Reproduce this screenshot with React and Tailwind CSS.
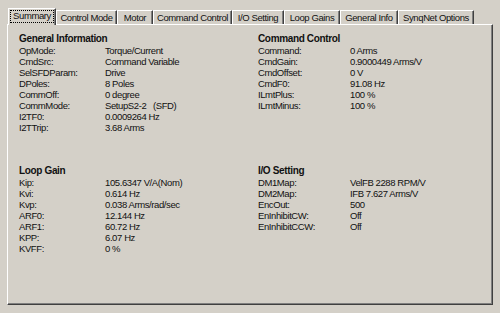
import React from "react";

const tabs = [
  { label: "Summary", w: "w-[48px]" },
  { label: "Control Mode", w: "w-[61px]" },
  { label: "Motor", w: "w-[36px]" },
  { label: "Command Control", w: "w-[79px]" },
  { label: "I/O Setting", w: "w-[52px]" },
  { label: "Loop Gains", w: "w-[56px]" },
  { label: "General Info", w: "w-[58px]" },
  { label: "SynqNet Options", w: "w-[76px]" },
];

const sections = [
  {
    title: "General Information",
    labelW: "grid-cols-[86px_1fr]",
    rows: [
      ["OpMode:", "Torque/Current"],
      ["CmdSrc:", "Command Variable"],
      ["SelSFDParam:", "Drive"],
      ["DPoles:", "8 Poles"],
      ["CommOff:", "0 degree"],
      ["CommMode:", "SetupS2-2   (SFD)"],
      ["I2TF0:", "0.0009264 Hz"],
      ["I2TTrip:", "3.68 Arms"],
    ],
  },
  {
    title: "Command Control",
    labelW: "grid-cols-[92px_1fr]",
    rows: [
      ["Command:", "0 Arms"],
      ["CmdGain:", "0.9000449 Arms/V"],
      ["CmdOffset:", "0 V"],
      ["CmdF0:", "91.08 Hz"],
      ["ILmtPlus:", "100 %"],
      ["ILmtMinus:", "100 %"],
    ],
  },
  {
    title: "Loop Gain",
    labelW: "grid-cols-[86px_1fr]",
    rows: [
      ["Kip:", "105.6347 V/A(Nom)"],
      ["Kvi:", "0.614 Hz"],
      ["Kvp:", "0.038 Arms/rad/sec"],
      ["ARF0:", "12.144 Hz"],
      ["ARF1:", "60.72 Hz"],
      ["KPP:", "6.07 Hz"],
      ["KVFF:", "0 %"],
    ],
  },
  {
    title: "I/O Setting",
    labelW: "grid-cols-[92px_1fr]",
    rows: [
      ["DM1Map:", "VelFB 2288 RPM/V"],
      ["DM2Map:", "IFB 7.627 Arms/V"],
      ["EncOut:", "500"],
      ["EnInhibitCW:", "Off"],
      ["EnInhibitCCW:", "Off"],
    ],
  },
];

const Section = ({ title, labelW, rows }) => (
  <div>
    <div className="font-bold text-[10px] leading-[11px] tracking-[-0.35px]">{title}</div>
    <div className={`grid ${labelW} mt-[1px]`}>
      {rows.map(([k, v]) => (
        <React.Fragment key={k}>
          <div className="leading-[11px]">{k}</div>
          <div className="leading-[11px] whitespace-pre">{v}</div>
        </React.Fragment>
      ))}
    </div>
  </div>
);

export default function App() {
  return (
    <div
      className="w-[500px] h-[313px] bg-[#d4d0c8] pl-[7px] pt-[8px] text-[9.5px] tracking-[-0.4px] text-[#111] overflow-hidden"
      style={{ fontFamily: '"Liberation Sans", Arial, sans-serif' }}
    >
      {/* Tab strip */}
      <div className="flex items-end h-[16px] pl-[1px]">
        {tabs.map((t, i) =>
          i === 0 ? (
            <div
              key={t.label}
              className={`${t.w} h-[17px] -mb-[1px] relative z-10 bg-[#d4d0c8] border-l border-t border-r border-l-white border-t-white border-r-[#404040] shadow-[inset_-1px_0_0_#808080] flex items-start justify-center pt-[1px]`}
            >
              <span className="border border-dotted border-black px-[2px] leading-[10px] pb-[1px]">{t.label}</span>
            </div>
          ) : (
            <div
              key={t.label}
              className={`${t.w} h-[14px] bg-[#d4d0c8] border-l border-t border-r border-l-white border-t-white border-r-[#404040] shadow-[inset_-1px_0_0_#808080] flex items-start justify-center pt-[1px] leading-[11px]`}
            >
              {t.label}
            </div>
          )
        )}
      </div>

      {/* Panel */}
      <div className="w-[486px] h-[281px] border border-l-white border-t-white border-r-[#404040] border-b-[#404040] shadow-[inset_-1px_-1px_0_#808080] pt-[8px] pl-[11px]">
        <div className="grid grid-cols-[239px_1fr] grid-rows-[132px_auto]">
          {sections.map((s) => (
            <Section key={s.title} {...s} />
          ))}
        </div>
      </div>
    </div>
  );
}
